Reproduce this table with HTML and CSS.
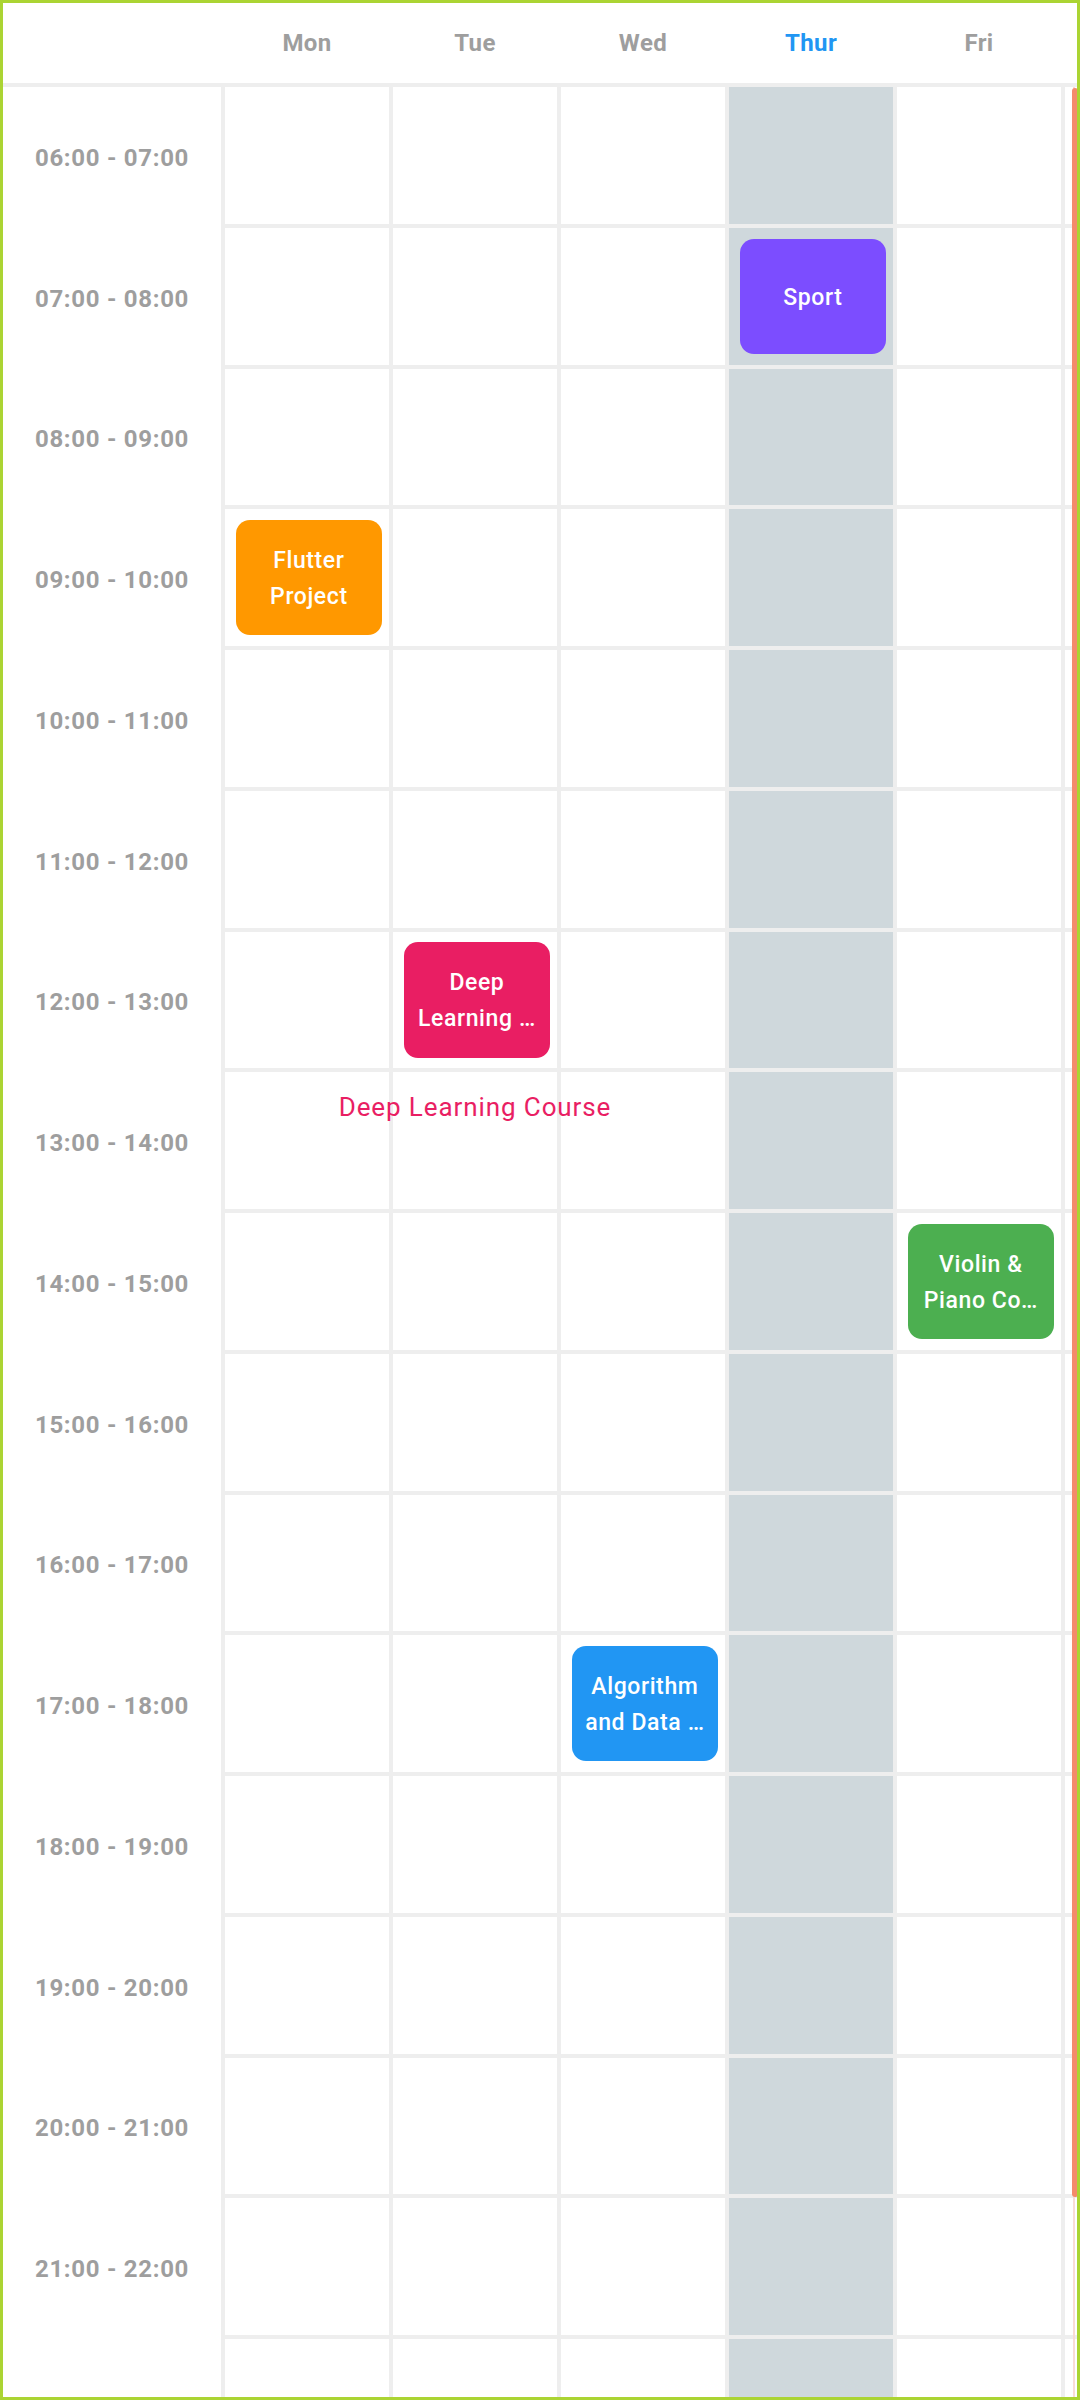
FILE: index.html
```html
<!DOCTYPE html>
<html>
<head>
<meta charset="utf-8">
<link rel="stylesheet" href="styles.css">
</head>
<body>
<div class="frame">
  <div class="header">
    <div class="corner"></div>
    <div class="day-head">Mon</div>
    <div class="day-head">Tue</div>
    <div class="day-head">Wed</div>
    <div class="day-head today-head">Thur</div>
    <div class="day-head">Fri</div>
    <div class="day-head"></div>
  </div>
  <div class="body">
    <div class="times">
      <div class="time">06:00 - 07:00</div>
      <div class="time">07:00 - 08:00</div>
      <div class="time">08:00 - 09:00</div>
      <div class="time">09:00 - 10:00</div>
      <div class="time">10:00 - 11:00</div>
      <div class="time">11:00 - 12:00</div>
      <div class="time">12:00 - 13:00</div>
      <div class="time">13:00 - 14:00</div>
      <div class="time">14:00 - 15:00</div>
      <div class="time">15:00 - 16:00</div>
      <div class="time">16:00 - 17:00</div>
      <div class="time">17:00 - 18:00</div>
      <div class="time">18:00 - 19:00</div>
      <div class="time">19:00 - 20:00</div>
      <div class="time">20:00 - 21:00</div>
      <div class="time">21:00 - 22:00</div>
      <div class="time"></div>
    </div>
    <div class="grid">
      <div class="col">
        <div class="cell"></div><div class="cell"></div><div class="cell"></div>
        <div class="cell"><div class="event orange"><span class="line">Flutter</span><span class="line">Project</span></div></div>
        <div class="cell"></div><div class="cell"></div><div class="cell"></div><div class="cell"></div>
        <div class="cell"></div><div class="cell"></div><div class="cell"></div><div class="cell"></div>
        <div class="cell"></div><div class="cell"></div><div class="cell"></div><div class="cell"></div>
        <div class="cell"></div>
      </div>
      <div class="col">
        <div class="cell"></div><div class="cell"></div><div class="cell"></div><div class="cell"></div>
        <div class="cell"></div><div class="cell"></div>
        <div class="cell anchor"><div class="event pink"><span class="line">Deep</span><span class="line">Learning …</span></div><div class="tooltip">Deep Learning Course</div></div>
        <div class="cell"></div>
        <div class="cell"></div><div class="cell"></div><div class="cell"></div><div class="cell"></div>
        <div class="cell"></div><div class="cell"></div><div class="cell"></div><div class="cell"></div>
        <div class="cell"></div>
      </div>
      <div class="col">
        <div class="cell"></div><div class="cell"></div><div class="cell"></div><div class="cell"></div>
        <div class="cell"></div><div class="cell"></div><div class="cell"></div><div class="cell"></div>
        <div class="cell"></div><div class="cell"></div><div class="cell"></div>
        <div class="cell"><div class="event blue"><span class="line">Algorithm</span><span class="line">and Data …</span></div></div>
        <div class="cell"></div><div class="cell"></div><div class="cell"></div><div class="cell"></div>
        <div class="cell"></div>
      </div>
      <div class="col today">
        <div class="cell"></div>
        <div class="cell"><div class="event purple"><span class="line">Sport</span></div></div>
        <div class="cell"></div><div class="cell"></div>
        <div class="cell"></div><div class="cell"></div><div class="cell"></div><div class="cell"></div>
        <div class="cell"></div><div class="cell"></div><div class="cell"></div><div class="cell"></div>
        <div class="cell"></div><div class="cell"></div><div class="cell"></div><div class="cell"></div>
        <div class="cell"></div>
      </div>
      <div class="col">
        <div class="cell"></div><div class="cell"></div><div class="cell"></div><div class="cell"></div>
        <div class="cell"></div><div class="cell"></div><div class="cell"></div><div class="cell"></div>
        <div class="cell"><div class="event green"><span class="line">Violin &amp;</span><span class="line">Piano Co…</span></div></div>
        <div class="cell"></div><div class="cell"></div><div class="cell"></div>
        <div class="cell"></div><div class="cell"></div><div class="cell"></div><div class="cell"></div>
        <div class="cell"></div>
      </div>
      <div class="col">
        <div class="cell"></div><div class="cell"></div><div class="cell"></div><div class="cell"></div>
        <div class="cell"></div><div class="cell"></div><div class="cell"></div><div class="cell"></div>
        <div class="cell"></div><div class="cell"></div><div class="cell"></div><div class="cell"></div>
        <div class="cell"></div><div class="cell"></div><div class="cell"></div><div class="cell"></div>
        <div class="cell"></div>
      </div>
    </div>
  </div>
  <div class="track"></div>
  <div class="thumb"></div>
</div>
</body>
</html>
```
FILE: styles.css
```css
html, body {
  margin: 0;
  padding: 0;
  background: #fff;
}

.frame {
  position: relative;
  width: 1080px;
  height: 2400px;
  box-sizing: border-box;
  border: 3px solid #ABD433;
  overflow: hidden;
  background: #fff;
  font-family: Roboto, "Liberation Sans", sans-serif;
}

.header {
  display: flex;
  height: 80px;
  border-bottom: 4px solid #EEEEEE;
}

.corner {
  width: 218px;
  flex-shrink: 0;
}

.day-head {
  width: 168px;
  flex-shrink: 0;
  box-sizing: border-box;
  padding-left: 4px;
  display: flex;
  align-items: center;
  justify-content: center;
  font-weight: 700;
  font-size: 24px;
  color: #9E9E9E;
  letter-spacing: 0.4px;
}

.today-head {
  color: #2196F3;
}

.body {
  display: flex;
}

.times {
  width: 218px;
  flex-shrink: 0;
  display: flex;
  flex-direction: column;
  gap: 4px;
}

.time {
  height: 136.75px;
  box-sizing: border-box;
  padding-top: 5px;
  display: flex;
  align-items: center;
  justify-content: center;
  font-weight: 700;
  font-size: 24px;
  letter-spacing: 0.7px;
  color: #9E9E9E;
}

.grid {
  display: flex;
  gap: 4px;
  padding-left: 4px;
  background: #EEEEEE;
  flex-shrink: 0;
}

.col {
  width: 164px;
  display: flex;
  flex-direction: column;
  gap: 4px;
}

.cell {
  height: 136.75px;
  background: #FFFFFF;
}

.today .cell {
  background: #CFD8DC;
}

.anchor {
  position: relative;
}

.event {
  margin: 10.75px 6.75px 10.75px 10.5px;
  height: 115.25px;
  box-sizing: border-box;
  padding-top: 3px;
  border-radius: 14px;
  display: flex;
  flex-direction: column;
  align-items: center;
  justify-content: center;
  color: #FFFFFF;
  font-weight: 500;
  font-size: 23px;
  line-height: 36px;
  letter-spacing: 0.6px;
  white-space: nowrap;
}

.line {
  display: block;
}

.orange { background: #FF9800; }
.pink { background: #E91E63; }
.blue { background: #2196F3; }
.purple { background: #7C4DFF; }
.green { background: #4CAF50; }

.tooltip {
  position: absolute;
  z-index: 2;
  top: 160px;
  left: 50%;
  transform: translateX(-50%);
  white-space: nowrap;
  font-size: 26px;
  letter-spacing: 0.9px;
  color: #E91E63;
}

.track {
  position: absolute;
  top: 84px;
  bottom: 0;
  right: 2px;
  width: 2px;
  background: #F9DCD6;
}

.thumb {
  position: absolute;
  top: 85px;
  right: -1px;
  width: 6px;
  height: 2109px;
  border-radius: 3px;
  background: #F48B6B;
}
```
